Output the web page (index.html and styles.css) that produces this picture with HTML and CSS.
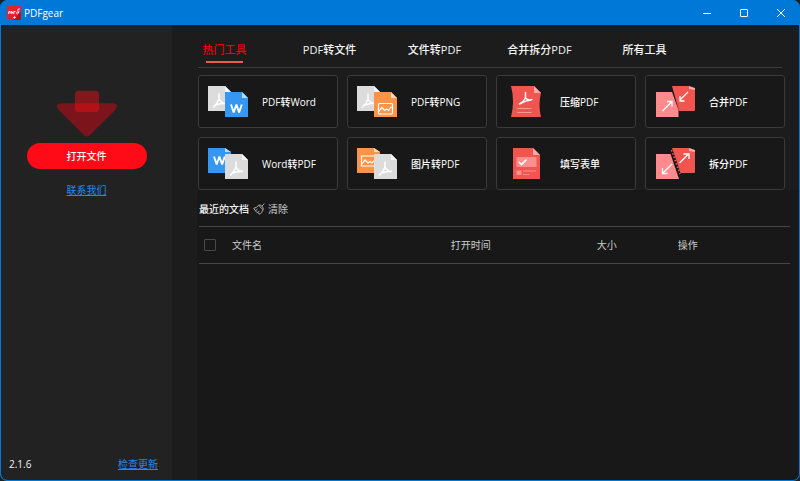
FILE: index.html
```html
<!DOCTYPE html>
<html lang="zh-CN">
<head>
<meta charset="utf-8">
<meta name="viewport" content="width=device-width, initial-scale=1">
<title>PDFgear</title>
<link rel="stylesheet" href="styles.css">
</head>
<body>
<svg class="defs" aria-hidden="true">
  <defs>
    <g id="pdf-page">
      <path fill="#dcdcdc" d="M0 0h17l6 6v19H0z"/>
      <path fill="#f6f6f6" d="M17 0v6h6z"/>
      <path fill="none" stroke="#fff" stroke-width="1.5" stroke-linecap="round" stroke-linejoin="round" d="M11 8v5M5.500 21q4-3.500 5.500-8 2 4 6.500 4.500M7.500 19q4.500-2 9-1.500"/>
    </g>
    <g id="word-page">
      <path fill="#3596f3" d="M0 0h17l6 6v19H0z"/>
      <path fill="#b5dafa" d="M17 0v6h6z"/>
      <path fill="none" stroke="#fff" stroke-width="1.9" stroke-linejoin="bevel" d="M6 12.500l2.700 8 2.700-8 2.700 8 2.700-8"/>
    </g>
    <g id="image-page">
      <path fill="#fd9447" d="M0 0h17l6 6v19H0z"/>
      <path fill="#fdd9b5" d="M17 0v6h6z"/>
      <rect x="4.500" y="11.500" width="14" height="10.500" rx="1" fill="none" stroke="#fff" stroke-width="1.2"/>
      <path fill="none" stroke="#fff" stroke-width="1.2" d="M4.500 19.500l3.500-4 2.500 3 2-1.500 2 1.500 2.500-3.500 1.500 1"/>
    </g>
  </defs>
</svg>
<div class="window">
  <header class="titlebar">
    <svg class="logo" viewBox="0 0 14 14" aria-hidden="true">
      <rect width="14" height="14" rx="1" fill="#e6202c"/>
      <path fill="#b50f20" d="M6 14l8-8v8z"/>
      <path fill="none" stroke="#fff" d="M1.800 8V5.500h1.400v1.300M4.200 8V5.500q2 0 1.500 2M6.800 8V5.500h1.700M9.500 7.500l1-2M12.800 3q-2.500-.5-2 1.500l1 1q0 2-1.500 2.500"/>
      <path fill="#fff" d="M7.500 9.800l.6 1.100 1.200.5-1.200.5-.6 1.100-.6-1.100-1.200-.5 1.200-.5z"/>
    </svg>
    <h1 class="app-name">PDFgear</h1>
    <div class="window-buttons">
      <button type="button" aria-label="最小化"><svg viewBox="0 0 10 10"><path d="M1 5.500h8"/></svg></button>
      <button type="button" aria-label="最大化"><svg viewBox="0 0 10 10"><rect x="1.500" y="1.500" width="7" height="7" rx="0.5"/></svg></button>
      <button type="button" aria-label="关闭"><svg viewBox="0 0 10 10"><path d="M1 1l8 8M9 1L1 9"/></svg></button>
    </div>
  </header>
  <div class="body">
    <aside class="sidebar">
      <svg class="drop-arrow" viewBox="0 0 62 48" aria-hidden="true">
        <path fill="#7b151b" d="M4 13h54c4 0 5 4 2.500 6.500L34 46q-3 2.500-6 0L1.500 19.500C-1 17 0 13 4 13z"/>
        <rect x="18.500" y="0" width="25" height="22" rx="4" fill="#fb0a16" fill-opacity=".45"/>
      </svg>
      <button type="button" class="open-button">打开文件</button>
      <a class="link" href="#contact">联系我们</a>
      <footer class="sidebar-footer">
        <span>2.1.6</span>
        <a class="link" href="#update">检查更新</a>
      </footer>
    </aside>
    <main class="main">
      <nav class="tabs">
        <button type="button" class="tab active">热门工具</button>
        <button type="button" class="tab">PDF转文件</button>
        <button type="button" class="tab">文件转PDF</button>
        <button type="button" class="tab">合并拆分PDF</button>
        <button type="button" class="tab">所有工具</button>
      </nav>
      <section class="tools">
        <button type="button" class="tool">
          <svg viewBox="0 0 40 31"><use href="#pdf-page"/><use href="#word-page" x="17" y="6"/></svg>
          <span>PDF转Word</span>
        </button>
        <button type="button" class="tool">
          <svg viewBox="0 0 40 31"><use href="#pdf-page"/><use href="#image-page" x="17" y="6"/></svg>
          <span>PDF转PNG</span>
        </button>
        <button type="button" class="tool">
          <svg viewBox="0 0 40 31">
            <path fill="#f0554f" d="M5 0h23l7 7q-3 12 0 24H5q4-15.500 0-31z"/>
            <path fill="#fbaaa7" d="M28 0v7h7z"/>
            <path fill="none" stroke="#fff" stroke-width="1.5" stroke-linecap="round" stroke-linejoin="round" d="M19.500 6.500v5.500M13.500 18q4.500-2.500 6-6 2.500 3 6.500 1.500M15 17.500q4.500-3 10-3.500"/>
            <path stroke="#f99b97" d="M11.500 22.500h14M11.500 26.500h14"/>
          </svg>
          <span>压缩PDF</span>
        </button>
        <button type="button" class="tool">
          <svg viewBox="0 0 40 31">
            <path fill="#f0554f" d="M17 0h17l6 4v20q0 1-1 1H24z"/>
            <path fill="#fbaaa7" d="M34 0v3l6 1V2z"/>
            <path fill="#fd8b8d" d="M1 6h16l6.500 18v7H1z"/>
            <path fill="none" stroke="#fff" stroke-width="1.3" d="M7.500 25l9-9M12 15.500h5v5M33 6l-8.500 8.500M25 10v5h4.500"/>
          </svg>
          <span>合并PDF</span>
        </button>
        <button type="button" class="tool">
          <svg viewBox="0 0 40 31">
            <path fill="#3596f3" d="M0 0h17l6 4v21H0z"/>
            <path fill="#b5dafa" d="M17 0v4h6z"/>
            <path fill="none" stroke="#fff" stroke-width="1.9" stroke-linejoin="bevel" d="M6 8.500l2.700 8 2.700-8 2.700 8 2.700-8"/>
            <use href="#pdf-page" x="17" y="6"/>
          </svg>
          <span>Word转PDF</span>
        </button>
        <button type="button" class="tool">
          <svg viewBox="0 0 40 31">
            <path fill="#fd9447" d="M0 0h17l6 4v21H0z"/>
            <path fill="#fdd9b5" d="M17 0v4h6z"/>
            <path fill="none" stroke="#fff" stroke-width="1.2" d="M19 8H4.500v10H18M5 16l3-4 3 3 2-1.500 2 1.500 3-3"/>
            <use href="#pdf-page" x="17" y="6"/>
          </svg>
          <span>图片转PDF</span>
        </button>
        <button type="button" class="tool">
          <svg viewBox="0 0 40 31">
            <path fill="#f0554f" d="M7 0h20l7 7v24H7z"/>
            <path fill="#fbaaa7" d="M27 0v7h7z"/>
            <path fill="#fd8f8e" d="M10.500 9h20v10h-20zM10.500 22.500h5v4.500h-5zM17 22.500h13v1H17zM17 26h6v1h-6z"/>
            <path fill="none" stroke="#fff" stroke-width="1.7" d="M13 14l2.500 2.500 5-5"/>
          </svg>
          <span>填写表单</span>
        </button>
        <button type="button" class="tool">
          <svg viewBox="0 0 40 31">
            <path fill="#f0554f" d="M17 0h17l6 4v20q0 1-1 1H25z"/>
            <path fill="#fbaaa7" d="M34 0v3l6 1V2z"/>
            <path fill="#fd8b8d" d="M1 6h14.500L24 31H1z"/>
            <path stroke="#181818" stroke-width="2.2" d="M16.500 2L25 27"/>
            <path stroke="#f0554f" stroke-width="1.6" stroke-dasharray="1.5 2" d="M16.500 2L25 26"/>
            <path fill="none" stroke="#fff" stroke-width="1.3" d="M17 16l-9 9M7.500 20v5.500h5M24.500 15L33 6.500M28.500 6H34v5"/>
          </svg>
          <span>拆分PDF</span>
        </button>
      </section>
      <section class="recent">
        <div class="recent-head">
          <h2>最近的文档</h2>
          <button type="button" class="clear">
            <svg viewBox="0 0 12 12"><path d="M11.300.7L8.500 3.500M5.500 2.300L10 6.800M5.500 2.300q1.500-1 3 .5l.7.7q1.500 1.500.8 3.300M5.500 2.300Q4 4.800.7 5.300q2 4 6.300 6 2-1.500 3-4.500M2.500 7.500l2-1.300M4.500 9.800l2-2"/></svg>
            <span>清除</span>
          </button>
        </div>
        <table class="files">
          <thead>
            <tr>
              <th class="col-check"><input type="checkbox" aria-label="全选"></th>
              <th class="col-name">文件名</th>
              <th class="col-time">打开时间</th>
              <th class="col-size">大小</th>
              <th class="col-action">操作</th>
            </tr>
          </thead>
          <tbody></tbody>
        </table>
      </section>
    </main>
  </div>
</div>
</body>
</html>
```
FILE: styles.css
```css
* {
  box-sizing: border-box;
}

body {
  margin: 0;
  background: #202020;
  color: #f4f4f4;
  font: 10px/16px "Open Sans", "Noto Sans CJK SC", sans-serif;
}

button {
  padding: 0;
  border: 0;
  background: none;
  color: inherit;
  font: inherit;
}

h1,
h2 {
  margin: 0;
  font-size: 10px;
  font-weight: 400;
}

.defs {
  position: absolute;
  width: 0;
  height: 0;
}

.window {
  display: flex;
  flex-direction: column;
  min-height: 100vh;
  overflow: hidden;
  border: 1px solid #0078d7;
  border-radius: 7px;
  background: #0078d7;
}

.titlebar {
  display: flex;
  align-items: center;
  height: 24px;
  padding-left: 6px;
  color: #fff;
}

.logo {
  width: 14px;
  height: 14px;
  margin-right: 3px;
}

.window-buttons {
  display: flex;
  margin-left: auto;
}

.window-buttons button {
  display: grid;
  place-items: center;
  width: 37px;
  height: 24px;
}

.window-buttons svg {
  width: 10px;
  height: 10px;
  fill: none;
  stroke: #fff;
}

.body {
  display: flex;
  flex: 1;
  overflow: hidden;
  border-radius: 0 0 6px 6px;
}

.sidebar {
  display: flex;
  flex: none;
  flex-direction: column;
  align-items: center;
  width: 171px;
  padding: 65px 8px 8px;
  background: #222;
}

.drop-arrow {
  width: 60px;
  height: 48px;
  margin-bottom: 5px;
}

.open-button {
  width: 120px;
  height: 26px;
  margin-bottom: 13px;
  border-radius: 13px;
  background: #ff0a16;
  color: #fff;
  font-weight: 500;
}

.link {
  color: #2389ee;
  text-decoration: underline;
}

.sidebar-footer {
  display: flex;
  justify-content: space-between;
  align-self: stretch;
  margin-top: auto;
  padding-right: 6px;
}

.main {
  display: flex;
  flex: 1;
  flex-direction: column;
  min-width: 0;
  background: #1c1c1c;
}

.tabs {
  display: grid;
  grid-template-columns: repeat(5, 1fr);
  height: 43px;
  padding-right: 102px;
  background: linear-gradient(#3c3c3c, #3c3c3c) 26px 100% / calc(100% - 43px) 1px no-repeat;
}

.tab {
  height: 38px;
  padding-top: 12px;
  justify-self: center;
  font-size: 11px;
  font-weight: 500;
}

.tab.active {
  background: linear-gradient(#f05a50, #f05a50) 50% 100% / 37px 2px no-repeat;
  color: #e60012;
}

.tools {
  display: grid;
  grid-template-columns: repeat(4, 1fr);
  gap: 9px;
  padding: 7px 14px 0 26px;
}

.tool {
  display: flex;
  align-items: center;
  gap: 14px;
  height: 53px;
  padding-left: 9px;
  border: 1px solid #3a3a3a;
  border-radius: 3px;
  background: #181818;
  color: #fff;
  font-weight: 500;
  text-align: left;
}

.tool svg {
  flex: none;
  width: 40px;
  height: 31px;
}

.recent {
  flex: 1;
  margin-left: 25px;
  padding: 11px 9px 0 2px;
  background: #181818;
}

.recent-head {
  display: flex;
  align-items: center;
  gap: 4px;
  margin-bottom: 9px;
}

.recent-head h2 {
  font-weight: 500;
}

.clear {
  display: flex;
  align-items: center;
  gap: 3px;
  color: #ccc;
}

.clear svg {
  width: 12px;
  height: 12px;
  fill: none;
  stroke: #aaa;
}

.files {
  width: 100%;
  border-collapse: collapse;
  table-layout: fixed;
}

.files th {
  height: 37px;
  padding: 0;
  border-top: 1px solid #454545;
  border-bottom: 1px solid #454545;
  color: #ccc;
  font-weight: 400;
  text-align: left;
}

.files .col-check {
  width: 33px;
  padding-left: 5px;
}

.col-check input {
  display: block;
  width: 12px;
  height: 12px;
  margin: 0;
  appearance: none;
  border: 1px solid #4a4a4a;
  border-radius: 1px;
}

.col-size {
  width: 81px;
}

.col-time {
  width: 146px;
}

.col-action {
  width: 19%;
}
```
